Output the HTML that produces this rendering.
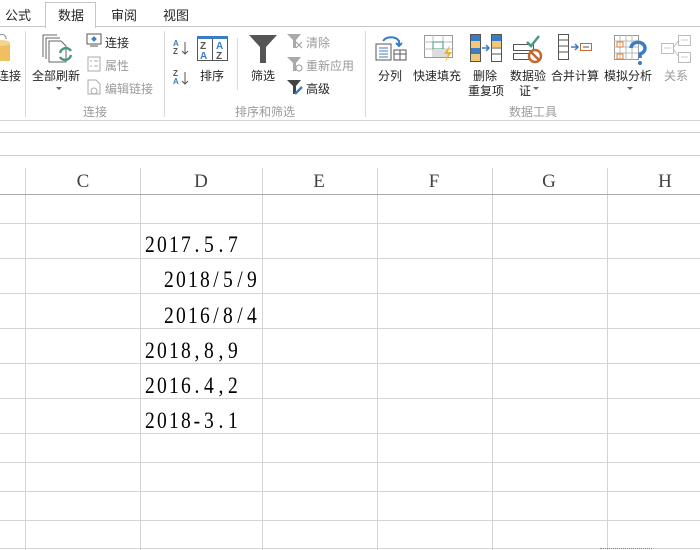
<!DOCTYPE html>
<html><head><meta charset="utf-8"><style>
*{margin:0;padding:0;box-sizing:border-box}
body{width:700px;height:550px;overflow:hidden;background:#fff;position:relative;font-family:"Liberation Sans","Noto Sans CJK SC",sans-serif;color:#262626}
.a{position:absolute;white-space:nowrap}
.t{font-size:13px}
.s{font-size:12px}
.g{color:#9a9a9a}
.hl{position:absolute;left:0;width:700px;height:1px;background:#d4d4d4}
.vl{position:absolute;top:168px;bottom:0;width:1px;background:#d4d4d4}
.d{position:absolute;font-family:"Liberation Serif","Noto Serif CJK SC",serif;font-size:23px;color:#000;line-height:24px;white-space:nowrap}
.d span{display:inline-block;width:11.85px;text-align:center;transform:scaleX(0.85)}
.ch{position:absolute;top:171px;font-family:"Liberation Serif","Noto Serif CJK SC",serif;font-size:19px;color:#444;width:40px;text-align:center}
</style></head><body>
<div class="a t" style="left:5px;top:5px">公式</div>
<div class="a" style="left:45px;top:2px;width:51px;height:26px;border:1px solid #c6c6c6;border-bottom:none;background:#fff;z-index:2"></div>
<div class="a t" style="left:58px;top:5px;z-index:3">数据</div>
<div class="a t" style="left:111px;top:5px">审阅</div>
<div class="a t" style="left:163px;top:5px">视图</div>
<div class="a" style="left:0;top:26px;width:700px;height:1px;background:#c6c6c6"></div>
<div class="a" style="left:0;top:120px;width:700px;height:1px;background:#d4d4d4"></div>
<div class="a" style="left:25px;top:31px;width:1px;height:86px;background:#dadada"></div>
<div class="a" style="left:164px;top:31px;width:1px;height:86px;background:#dadada"></div>
<div class="a" style="left:365px;top:31px;width:1px;height:86px;background:#dadada"></div>
<div class="a" style="left:237px;top:38px;width:1px;height:52px;background:#dadada"></div>
<svg class="a" style="left:0;top:33px" width="12" height="30"><rect x="-6" y="10" width="16" height="18" fill="#f0c060"/><ellipse cx="2" cy="10" rx="8" ry="3" fill="#f5d490"/><path d="M0 2 a4 4 0 0 1 6 4" stroke="#888" fill="none"/></svg>
<div class="a s" style="left:-3px;top:67px">连接</div>
<svg class="a" style="left:42px;top:33px" width="32" height="32"><path d="M1 24V2h14M4 26V5h14M7 29V8h12l5 5v16z" fill="#fff" stroke="#666"/><path d="M18 20a6 6 0 0 1 11-2M29 22a6 6 0 0 1-11 2" stroke="#4a9a7a" stroke-width="2.5" fill="none"/></svg>
<div class="a s" style="left:32px;top:67px">全部刷新</div>
<div class="a" style="left:56px;top:87px;border:3px solid transparent;border-top:3px solid #666"></div>
<svg class="a" style="left:86px;top:33px" width="16" height="14"><rect x="1" y="1" width="14" height="10" fill="#fff" stroke="#555"/><rect x="6" y="4" width="4" height="4" fill="#3b7dc4" transform="rotate(45 8 6)"/><path d="M4 13h8" stroke="#555"/></svg>
<div class="a s" style="left:105px;top:34px">连接</div>
<svg class="a" style="left:87px;top:56px" width="14" height="16"><rect x="1" y="1" width="12" height="14" fill="#fff" stroke="#aaa"/><path d="M3 5h2M7 5h4M3 10h2M7 10h4" stroke="#aaa"/></svg>
<div class="a s g" style="left:105px;top:57px">属性</div>
<svg class="a" style="left:87px;top:79px" width="14" height="16"><path d="M1 1h8l4 4v10H1z" fill="#fff" stroke="#aaa"/><circle cx="7" cy="12" r="3" fill="none" stroke="#aaa"/></svg>
<div class="a s g" style="left:105px;top:80px">编辑链接</div>
<div class="a s g" style="left:83px;top:103px">连接</div>
<svg class="a" style="left:172px;top:39px" width="18" height="50" font-family="Liberation Sans" font-size="8" font-weight="bold"><text x="1" y="7" fill="#3b7dc4">A</text><text x="1" y="15" fill="#555">Z</text><path d="M13 3v12M10 12l3 3 3-3" stroke="#555" fill="none"/><text x="1" y="37" fill="#555">Z</text><text x="1" y="45" fill="#3b7dc4">A</text><path d="M13 33v12M10 42l3 3 3-3" stroke="#555" fill="none"/></svg>
<svg class="a" style="left:197px;top:36px" width="31" height="25" font-family="Liberation Sans" font-size="10" font-weight="bold"><rect x="0.5" y="0.5" width="30" height="24" fill="#fff" stroke="#555"/><rect x="0" y="0" width="31" height="3" fill="#3b7dc4"/><path d="M15.5 3v21" stroke="#555"/><text x="3" y="13" fill="#555">Z</text><text x="3" y="23" fill="#3b7dc4">A</text><text x="19" y="13" fill="#3b7dc4">A</text><text x="19" y="23" fill="#555">Z</text></svg>
<div class="a s" style="left:200px;top:67px">排序</div>
<svg class="a" style="left:249px;top:35px" width="28" height="28"><path d="M0 0h28L17 12v16h-6V12z" fill="#555"/></svg>
<div class="a s" style="left:251px;top:67px">筛选</div>
<svg class="a" style="left:287px;top:33px" width="16" height="16"><path d="M0 1h14L9 7v8H6V7z" fill="#aaa"/><path d="M9 9l6 6M15 9l-6 6" stroke="#999"/></svg>
<div class="a s g" style="left:306px;top:34px">清除</div>
<svg class="a" style="left:287px;top:56px" width="16" height="16"><path d="M0 1h14L9 7v8H6V7z" fill="#aaa"/><circle cx="12" cy="12" r="3" fill="none" stroke="#999"/></svg>
<div class="a s g" style="left:306px;top:57px">重新应用</div>
<svg class="a" style="left:287px;top:79px" width="16" height="16"><path d="M0 1h14L9 7v8H6V7z" fill="#444"/><path d="M8 15l7-7" stroke="#3b7dc4" stroke-width="2.5"/></svg>
<div class="a s" style="left:306px;top:80px">高级</div>
<div class="a s g" style="left:235px;top:103px">排序和筛选</div>
<svg class="a" style="left:375px;top:33px" width="32" height="28"><rect x="1" y="11" width="15" height="16" fill="#fff" stroke="#555"/><path d="M4 15h9M4 18h9M4 21h9M4 24h9" stroke="#3b7dc4"/><rect x="19" y="17" width="12" height="10" fill="#fff" stroke="#555"/><path d="M19 21h12M25 17v10" stroke="#555"/><path d="M8 8a9 7 0 0 1 16 0v4M21 10l3 3 3-3" stroke="#3b7dc4" stroke-width="2" fill="none"/></svg>
<div class="a s" style="left:378px;top:67px">分列</div>
<svg class="a" style="left:424px;top:35px" width="32" height="28"><rect x="0.5" y="0.5" width="28" height="22" fill="#fff" stroke="#999"/><path d="M0 7h28M0 14h28M9 0v22M19 0v22" stroke="#bbb"/><rect x="9" y="7" width="10" height="7" fill="#fff" stroke="#4a9a7a"/><rect x="9" y="14" width="15" height="8" fill="#ddd"/><path d="M26 10l-6 9h4l-3 8 7-10h-4z" fill="#f0b030"/></svg>
<div class="a s" style="left:413px;top:67px">快速填充</div>
<svg class="a" style="left:470px;top:34px" width="32" height="28"><rect x="0.5" y="0.5" width="10" height="27" fill="#f0c878" stroke="#555"/><rect x="1" y="1" width="9" height="6" fill="#3b7dc4"/><rect x="1" y="14" width="9" height="6" fill="#3b7dc4"/><path d="M12 14h7M16 11l3 3-3 3" stroke="#3b7dc4" stroke-width="1.5" fill="none"/><rect x="21.5" y="0.5" width="10" height="27" fill="#fff" stroke="#555"/><rect x="22" y="1" width="9" height="6" fill="#3b7dc4"/><rect x="22" y="7" width="9" height="6" fill="#f0c878"/><path d="M21 14h11M21 20h11" stroke="#555"/></svg>
<div class="a s" style="left:473px;top:67px">删除</div>
<div class="a s" style="left:468px;top:82px">重复项</div>
<svg class="a" style="left:513px;top:34px" width="32" height="30"><rect x="0.5" y="10.5" width="20" height="6" fill="#fff" stroke="#555"/><rect x="0.5" y="19.5" width="20" height="6" fill="#fff" stroke="#555"/><path d="M14 8l4 4 8-10" stroke="#4a9a7a" stroke-width="2.5" fill="none"/><circle cx="22" cy="22" r="6" fill="#fff" stroke="#c06a30" stroke-width="2.5"/><path d="M18 18l8 8" stroke="#c06a30" stroke-width="2.5"/></svg>
<div class="a s" style="left:510px;top:67px">数据验</div>
<div class="a s" style="left:519px;top:82px">证</div>
<div class="a" style="left:533px;top:87px;border:3px solid transparent;border-top:3px solid #666"></div>
<svg class="a" style="left:558px;top:34px" width="34" height="26"><rect x="0.5" y="0.5" width="10" height="25" fill="#fff" stroke="#555"/><path d="M1 6h10M1 12h10M1 18h10" stroke="#555"/><path d="M13 13h7M17 10l3 3-3 3" stroke="#3b7dc4" stroke-width="1.5" fill="none"/><rect x="22.5" y="9.5" width="11" height="7" fill="#fff" stroke="#c06a30"/><path d="M25 13h6" stroke="#555"/></svg>
<div class="a s" style="left:551px;top:67px">合并计算</div>
<svg class="a" style="left:614px;top:35px" width="34" height="30"><rect x="0.5" y="0.5" width="24" height="24" fill="#fff" stroke="#999"/><path d="M0 6h25M0 12h25M0 18h25M6 0v25M12 0v25M18 0v25" stroke="#bbb"/><rect x="3" y="7" width="6" height="5" fill="none" stroke="#e08030"/><rect x="3" y="19" width="6" height="5" fill="none" stroke="#e08030"/><path d="M17 13a7 6 0 1 1 9 6v4" stroke="#3b7dc4" stroke-width="3.5" fill="none"/><circle cx="26" cy="28" r="2" fill="#3b7dc4"/></svg>
<div class="a s" style="left:604px;top:67px">模拟分析</div>
<div class="a" style="left:627px;top:87px;border:3px solid transparent;border-top:3px solid #666"></div>
<svg class="a" style="left:661px;top:34px" width="30" height="30"><rect x="0.5" y="9.5" width="12" height="10" fill="#fff" stroke="#bbb"/><rect x="17.5" y="1.5" width="12" height="10" fill="#fff" stroke="#bbb"/><rect x="17.5" y="18.5" width="12" height="10" fill="#fff" stroke="#bbb"/><path d="M12 14l6-8M12 15l6 8" stroke="#bbb"/><path d="M3 14h7M20 6h7M20 23h7" stroke="#ccc"/></svg>
<div class="a s g" style="left:664px;top:67px">关系</div>
<div class="a s g" style="left:509px;top:103px">数据工具</div>
<div class="a" style="left:0;top:132px;width:700px;height:1px;background:#d0d0d0"></div>
<div class="a" style="left:0;top:155px;width:700px;height:1px;background:#d0d0d0"></div>
<div class="vl" style="left:25px"></div>
<div class="vl" style="left:140px"></div>
<div class="vl" style="left:262px"></div>
<div class="vl" style="left:377px"></div>
<div class="vl" style="left:492px"></div>
<div class="vl" style="left:607px"></div>
<div class="hl" style="top:194px;background:#ababab"></div>
<div class="hl" style="top:223px"></div>
<div class="hl" style="top:258px"></div>
<div class="hl" style="top:293px"></div>
<div class="hl" style="top:328px"></div>
<div class="hl" style="top:363px"></div>
<div class="hl" style="top:398px"></div>
<div class="hl" style="top:433px"></div>
<div class="hl" style="top:462px"></div>
<div class="hl" style="top:491px"></div>
<div class="hl" style="top:520px"></div>
<div class="hl" style="top:548px"></div>
<div class="ch" style="left:63px">C</div>
<div class="ch" style="left:181px">D</div>
<div class="ch" style="left:299px">E</div>
<div class="ch" style="left:414px">F</div>
<div class="ch" style="left:529px">G</div>
<div class="ch" style="left:645px">H</div>
<div class="d" style="left:144px;top:233px"><span>2</span><span>0</span><span>1</span><span>7</span><span>.</span><span>5</span><span>.</span><span>7</span></div>
<div class="d" style="left:163px;top:268px"><span>2</span><span>0</span><span>1</span><span>8</span><span>/</span><span>5</span><span>/</span><span>9</span></div>
<div class="d" style="left:163px;top:304px"><span>2</span><span>0</span><span>1</span><span>6</span><span>/</span><span>8</span><span>/</span><span>4</span></div>
<div class="d" style="left:144px;top:339px"><span>2</span><span>0</span><span>1</span><span>8</span><span>,</span><span>8</span><span>,</span><span>9</span></div>
<div class="d" style="left:144px;top:374px"><span>2</span><span>0</span><span>1</span><span>6</span><span>.</span><span>4</span><span>,</span><span>2</span></div>
<div class="d" style="left:144px;top:409px"><span>2</span><span>0</span><span>1</span><span>8</span><span>-</span><span>3</span><span>.</span><span>1</span></div>
<div class="a" style="left:600px;top:548px;width:52px;border-top:1px dotted #888"></div>
</body></html>
